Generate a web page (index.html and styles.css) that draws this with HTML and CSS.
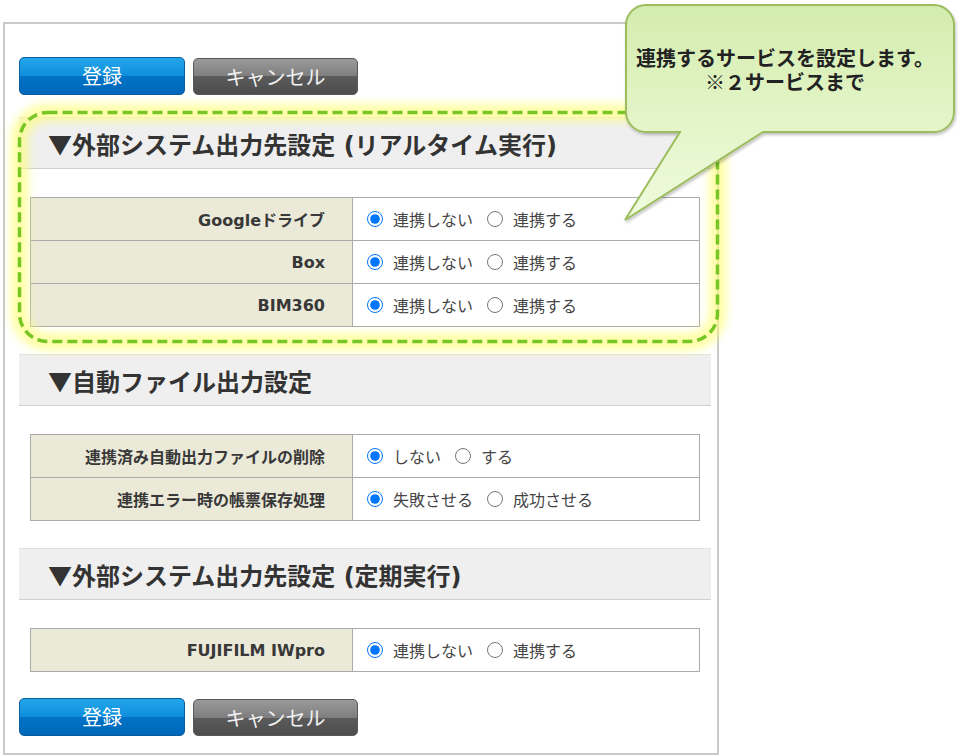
FILE: index.html
```html
<!DOCTYPE html>
<html lang="ja">
<head>
<meta charset="utf-8">
<title>外部システム出力先設定</title>
<link rel="stylesheet" href="styles.css">
</head>
<body>
<div class="panel">
  <div class="btns">
    <button class="btn btn-blue">登録</button>
    <button class="btn btn-gray">キャンセル</button>
  </div>

  <div class="sec-head"><span class="cjk">▼</span>外部システム出力先設定 (リアルタイム実行)</div>
  <table class="form">
    <colgroup><col class="c-label"><col></colgroup>
    <tr><th>Googleドライブ</th><td><div class="opts"><label class="opt"><input type="radio" name="g" checked><span>連携しない</span></label><label class="opt"><input type="radio" name="g"><span>連携する</span></label></div></td></tr>
    <tr><th>Box</th><td><div class="opts"><label class="opt"><input type="radio" name="b" checked><span>連携しない</span></label><label class="opt"><input type="radio" name="b"><span>連携する</span></label></div></td></tr>
    <tr><th>BIM360</th><td><div class="opts"><label class="opt"><input type="radio" name="m" checked><span>連携しない</span></label><label class="opt"><input type="radio" name="m"><span>連携する</span></label></div></td></tr>
  </table>

  <div class="sec-head"><span class="cjk">▼</span>自動ファイル出力設定</div>
  <table class="form">
    <colgroup><col class="c-label"><col></colgroup>
    <tr><th>連携済み自動出力ファイルの削除</th><td><div class="opts"><label class="opt"><input type="radio" name="d" checked><span>しない</span></label><label class="opt"><input type="radio" name="d"><span>する</span></label></div></td></tr>
    <tr><th>連携エラー時の帳票保存処理</th><td><div class="opts"><label class="opt"><input type="radio" name="e" checked><span>失敗させる</span></label><label class="opt"><input type="radio" name="e"><span>成功させる</span></label></div></td></tr>
  </table>

  <div class="sec-head"><span class="cjk">▼</span>外部システム出力先設定 (定期実行)</div>
  <table class="form form-last">
    <colgroup><col class="c-label"><col></colgroup>
    <tr><th>FUJIFILM IWpro</th><td><div class="opts"><label class="opt"><input type="radio" name="i" checked><span>連携しない</span></label><label class="opt"><input type="radio" name="i"><span>連携する</span></label></div></td></tr>
  </table>

  <div class="btns">
    <button class="btn btn-blue">登録</button>
    <button class="btn btn-gray">キャンセル</button>
  </div>
</div>

<svg class="overlay" width="965" height="756" viewBox="0 0 965 756" xmlns="http://www.w3.org/2000/svg">
  <defs>
    <filter id="glow" x="-10%" y="-20%" width="120%" height="140%">
      <feGaussianBlur stdDeviation="4.5"/>
    </filter>
    <linearGradient id="cg" x1="0" y1="0" x2="0" y2="1">
      <stop offset="0" stop-color="#d3ecae"/>
      <stop offset="0.55" stop-color="#e4f5c8"/>
      <stop offset="1" stop-color="#effbdf"/>
    </linearGradient>
    <filter id="shadow" x="-10%" y="-10%" width="125%" height="125%">
      <feGaussianBlur in="SourceAlpha" stdDeviation="1.5"/>
      <feOffset dx="1" dy="2" result="o"/>
      <feComponentTransfer><feFuncA type="linear" slope="0.25"/></feComponentTransfer>
      <feMerge><feMergeNode/><feMergeNode in="SourceGraphic"/></feMerge>
    </filter>
  </defs>
  <rect x="19.5" y="112.5" width="698" height="229" rx="28" ry="28" fill="none" stroke="#ffff70" stroke-width="18" opacity="0.6" filter="url(#glow)"/>
  <rect x="19.5" y="112.5" width="698" height="229" rx="28" ry="28" fill="none" stroke="#77c626" stroke-width="3.5" stroke-dasharray="10 5"/>
  <path filter="url(#shadow)" d="M646,5 H934 A20,20 0 0 1 954,25 V112 A20,20 0 0 1 934,132 H763 L625,220 L680,132 H646 A20,20 0 0 1 626,112 V25 A20,20 0 0 1 646,5 Z" fill="url(#cg)" stroke="#9cbd5d" stroke-width="2"/>
</svg>
<div class="callout-text"><div class="cl-line">連携するサービスを設定します。</div><div class="cl-line"><span class="cjk">※２</span>サービスまで</div></div>
</body>
</html>
```

FILE: styles.css
```css
* { box-sizing: border-box; }

body {
  margin: 0;
  background: #fff;
  font-family: "DejaVu Sans", "Noto Sans CJK JP", sans-serif;
  color: #333;
  width: 965px;
  height: 756px;
  overflow: hidden;
}

.cjk { font-family: "Noto Sans CJK JP", sans-serif; }

.panel {
  margin: 22px 0 0 3px;
  width: 716px;
  height: 733px;
  border: 2px solid #c9c9c9;
  padding: 33px 6px 0 14px;
}

.btns {
  display: flex;
  align-items: flex-end;
  gap: 8px;
  height: 38px;
}

.btn {
  font-family: "Noto Sans CJK JP", sans-serif;
  font-size: 20px;
  line-height: 1;
  padding: 0;
  border-radius: 5px;
  cursor: pointer;
  display: flex;
  align-items: center;
  justify-content: center;
}

.btn-blue {
  width: 166px;
  height: 38px;
  color: #fff;
  border: 1px solid #0a5c9c;
  background: linear-gradient(#24a6ea 0%, #0e8edb 50%, #0073c7 50%, #0067b9 100%);
}

.btn-gray {
  width: 165px;
  height: 37px;
  color: #f2f2f2;
  border: 1px solid #585858;
  background: linear-gradient(#9a9a9a 0%, #7e7e7e 50%, #5b5b5b 50%, #4d4d4d 100%);
}

.sec-head {
  margin-top: 22px;
  height: 52px;
  background: #efefef;
  border-top: 1px solid #e2e2e2;
  border-bottom: 1px solid #cfcfcf;
  padding-left: 29px;
  display: flex;
  align-items: center;
  font-size: 24px;
  font-weight: bold;
  color: #333;
  white-space: nowrap;
}

.form {
  margin: 28px 11px 27px 11px;
  width: 670px;
  border-collapse: collapse;
  table-layout: fixed;
}
.form-last { margin-bottom: 26px; }

.c-label { width: 322px; }

.form th,
.form td {
  border: 1px solid #aaa;
  height: 43px;
  padding: 0;
}

.form th {
  background: #ebe9d8;
  text-align: right;
  padding-right: 27px;
  font-size: 16px;
  font-weight: bold;
  color: #383838;
}

.form td {
  background: #fff;
  padding-left: 14px;
}

.opts {
  display: flex;
  align-items: center;
  gap: 14px;
}

.opt {
  display: flex;
  align-items: center;
  gap: 10px;
  font-family: "Noto Sans CJK JP", sans-serif;
  font-size: 16px;
  color: #454545;
}

.opt input {
  width: 16px;
  height: 16px;
  margin: 0;
}

.overlay {
  position: absolute;
  left: 0;
  top: 0;
  pointer-events: none;
}

.callout-text {
  position: absolute;
  left: 626px;
  top: 46px;
  width: 318px;
  text-align: center;
  font-family: "Noto Sans CJK JP", sans-serif;
  font-size: 20px;
  font-weight: bold;
  color: #222;
}

.cl-line {
  height: 24px;
  line-height: 24px;
}
```
